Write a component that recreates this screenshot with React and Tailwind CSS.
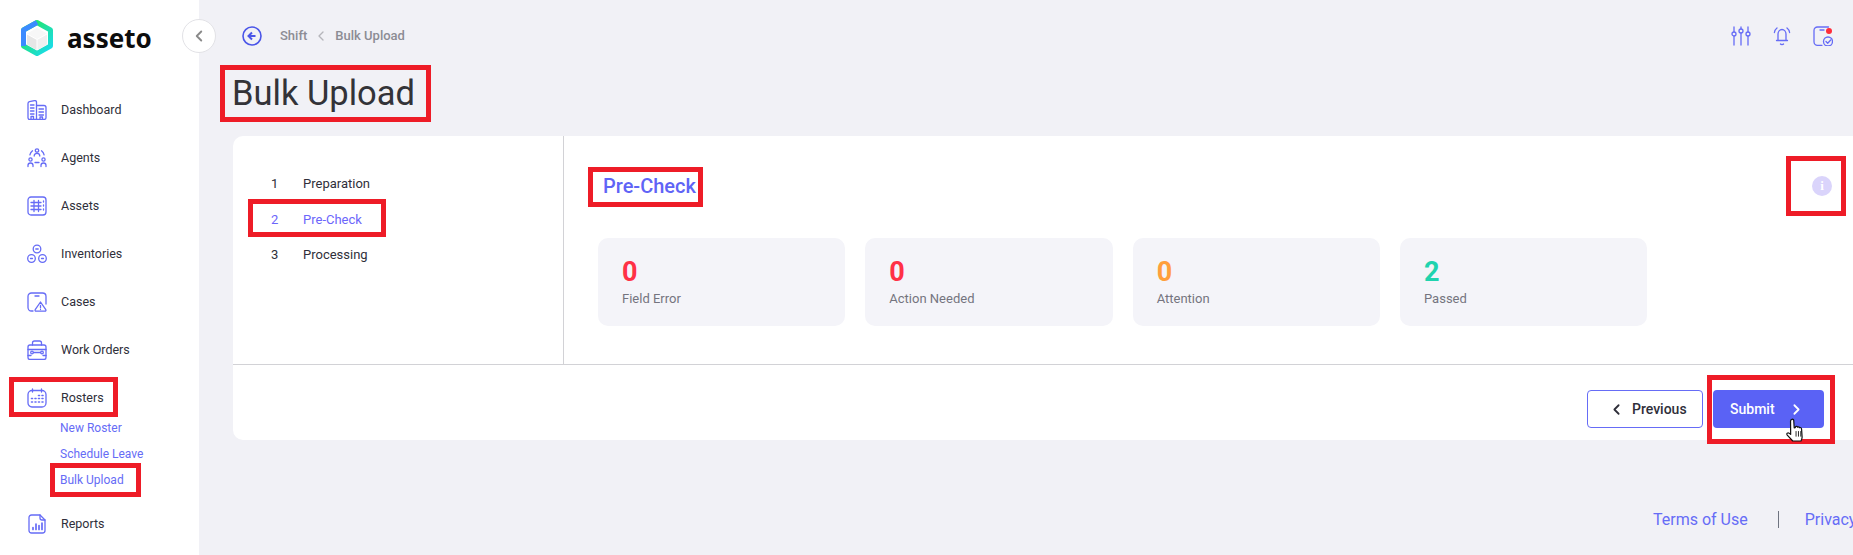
import React from 'react';
import { ChevronLeft, ChevronRight } from 'lucide-react';

const Ico = ({ children, size = 20, className = 'text-[#666cf6]' }) => (
  <svg width={size} height={size} viewBox="0 0 20 20" fill="none" stroke="currentColor" strokeWidth="1.3" strokeLinecap="round" strokeLinejoin="round" className={`shrink-0 ${className}`}>
    {children}
  </svg>
);

const DashboardIcon = () => (
  <Ico>
    <path d="M1 3.500c0-1 .6-1.600 1.500-1.800L7.500.6C8.600.4 9.500 1 9.500 2v17.400H2.600c-.9 0-1.600-.7-1.600-1.600z" />
    <path d="M9.500 5.500h7.400c1.200 0 2.100.9 2.100 2v10.300c0 .9-.7 1.600-1.600 1.600H9.500" />
    <path d="M3.500 5h3.500M3.500 8h3.500M3.500 11h3.500M3.500 14h3.500M12 9h4.500M12 12h4.500M12 15h4.500M4 19v-2.500h2.500V19M13 19v-2h2.500v2" />
  </Ico>
);
const AgentsIcon = () => (
  <Ico>
    <circle cx="10" cy="2.500" r="1.700" />
    <path d="M7.200 8c0-1.600 1.200-2.700 2.800-2.700s2.800 1.100 2.800 2.700M5.500 2.800C4 4 3.300 5 2.900 6.800M14.500 2.800c1.500 1.200 2.200 2.200 2.600 4" />
    <circle cx="3.500" cy="11.500" r="1.600" />
    <circle cx="16.500" cy="11.500" r="1.600" />
    <path d="M1 18.500v-1.200c0-1.300 1.100-2.300 2.500-2.300S6 16 6 17.300v1.200M14 18.500v-1.200c0-1.300 1.100-2.300 2.500-2.300s2.500 1 2.500 2.300v1.200M8 14.500h4" />
  </Ico>
);
const AssetsIcon = () => (
  <Ico>
    <rect x="1" y="1" width="18" height="18" rx="3" />
    <path d="M4 6.500h10M4 10h10M4 13.500h10M7 4.500v11M11.500 4.500v11M16.500 5v1M16.500 9v1M16.500 13v1" />
  </Ico>
);
const InventoriesIcon = () => (
  <Ico>
    <circle cx="10" cy="5" r="3.800" />
    <circle cx="4.500" cy="14.500" r="3.800" />
    <circle cx="15.500" cy="14.500" r="3.800" />
    <path d="M8.800 5h2.400M3.500 14.500h2M14.500 14.500h2" />
  </Ico>
);
const CasesIcon = () => (
  <Ico>
    <path d="M6 19H4.500C2.500 19 1 17.500 1 15.500v-11C1 2.500 2.500 1 4.500 1h11C17.500 1 19 2.500 19 4.500V12" />
    <path d="M8 4h4" />
    <path d="M13.500 10l5.300 7.700c.4.700 0 1.500-.8 1.500H9c-.8 0-1.200-.8-.8-1.500z" />
    <path d="M13.500 13.500v2.300M13.500 17.500v.1" />
  </Ico>
);
const WorkOrdersIcon = () => (
  <Ico>
    <path d="M5.500 5V3c0-1.100.9-2 2-2h5c1.100 0 2 .9 2 2v2" />
    <path d="M3 5h14c1.100 0 2 .9 2 2v10.500c0 1.100-.9 2-2 2H3c-1.100 0-2-.9-2-2V7c0-1.100.9-2 2-2z" />
    <path d="M1 9.500h18M1 15.500h3M16 15.500h3M6.500 12.500h7" />
    <circle cx="5" cy="12.500" r="1.300" />
    <circle cx="15" cy="12.500" r="1.300" />
  </Ico>
);
const RostersIcon = () => (
  <Ico>
    <rect x="1" y="2.500" width="18" height="16.500" rx="4" />
    <path d="M5.500 1v3M14.500 1v3" />
    <path d="M4.500 10.500h1M8 10.500h1M11.500 10.500h1M15 10.500h1M4.500 14h1M8 14h1M11.500 14h1M15 14h1M11.500 7.500h1M15 7.500h1" strokeWidth="1.600" />
  </Ico>
);
const ReportsIcon = () => (
  <Ico>
    <path d="M2 3.500C2 2.100 3.100 1 4.500 1H13l5 5v10.500c0 1.400-1.100 2.500-2.500 2.500h-11C3.100 19 2 17.900 2 16.500z" />
    <path d="M13 1v3c0 1.100.9 2 2 2h3" />
    <path d="M6 15.500v-2M9 15.500V10M12 15.500v-4M15 15.500V9" strokeWidth="1.700" />
  </Ico>
);

const Logo = () => (
  <svg width="36" height="38" viewBox="0 0 36 38" className="shrink-0">
    <defs>
      <linearGradient id="hexTop" x1="0" y1="0" x2="1" y2="1">
        <stop offset="0" stopColor="#20e84a" />
        <stop offset="0.5" stopColor="#20e0a0" />
        <stop offset="1" stopColor="#18dcf4" />
      </linearGradient>
    </defs>
    <path d="M18 3.500L31.500 11v16L18 34.500 4.500 27V11z" fill="none" stroke="url(#hexTop)" strokeWidth="5" strokeLinejoin="round" />
    <path d="M4.500 27V11L18 3.500" fill="none" stroke="#3b8bff" strokeWidth="5" strokeLinejoin="round" />
    <path d="M18 9l10 5.500-10 5.500-10-5.500z" fill="#f7f7f7" />
    <path d="M8 15.500l9.500 5.300V31L8 25.500z" fill="#e6e6e6" />
    <path d="M28 15.500l-9.500 5.300V31l9.500-5.500z" fill="#f0f0f0" />
  </svg>
);

const NAV = [
  { label: 'Dashboard', icon: DashboardIcon },
  { label: 'Agents', icon: AgentsIcon },
  { label: 'Assets', icon: AssetsIcon },
  { label: 'Inventories', icon: InventoriesIcon },
  { label: 'Cases', icon: CasesIcon },
  { label: 'Work Orders', icon: WorkOrdersIcon },
  { label: 'Rosters', icon: RostersIcon },
];

const STATS = [
  { value: '0', label: 'Field Error', color: 'text-[#ff3146]' },
  { value: '0', label: 'Action Needed', color: 'text-[#ff3146]' },
  { value: '0', label: 'Attention', color: 'text-[#ff9f3c]' },
  { value: '2', label: 'Passed', color: 'text-[#20d3ae]' },
];

const NavRow = ({ label, icon: Icon }) => (
  <div className="h-[48px] flex items-center pl-[27px] gap-[14px] text-[12.5px] text-[#2f2f3a]">
    <Icon />
    <span>{label}</span>
  </div>
);

const Sidebar = () => (
  <aside className="w-[199px] shrink-0 bg-white">
    <div className="h-[86px] pl-[19px] pt-[19px] flex items-start gap-[12px]">
      <Logo />
      <span className="font-['Noto_Sans',sans-serif] font-bold text-[26px] leading-[38px] text-[#0d0d0d]">asseto</span>
    </div>
    {NAV.map((n) => <NavRow key={n.label} {...n} />)}
    <div className="-mt-[7px] pl-[60px] text-[12px] text-[#666cf6]">
      <div className="h-[26px] flex items-center">New Roster</div>
      <div className="h-[26px] flex items-center">Schedule Leave</div>
      <div className="h-[26px] flex items-center">Bulk Upload</div>
    </div>
    <div className="mt-[7px]">
      <NavRow label="Reports" icon={ReportsIcon} />
    </div>
  </aside>
);

const Topbar = () => (
  <div className="h-[72px] flex items-center justify-between pr-[20px]">
    <div className="flex items-center text-[13px] font-medium text-[#8c8c94]">
      <svg width="20" height="20" viewBox="0 0 20 20" fill="none" className="ml-[9px] mr-[18px] text-[#4a55e8]" stroke="currentColor" strokeWidth="1.600">
        <circle cx="10" cy="10" r="9" />
        <path d="M10 6.500L6.500 10l3.500 3.500M7 10h6.500" strokeWidth="2" />
      </svg>
      <span>Shift</span>
      <ChevronLeft size={16} className="mx-[6px] text-[#b5b5bb]" />
      <span>Bulk Upload</span>
    </div>
    <div className="flex items-center gap-[21px]">
      <Ico>
        <path d="M3 1v5M3 10v9M10 1v2M10 7v12M17 1v5M17 10v9" />
        <circle cx="3" cy="8" r="2" />
        <circle cx="10" cy="5" r="2" />
        <circle cx="17" cy="8" r="2" />
      </Ico>
      <Ico>
        <path d="M6 14.500V8c0-2.500 1.700-4.500 4-4.500s4 2 4 4.500v6.500M4.500 14.500h11M8.500 18c.5.700 2.500.700 3 0" />
        <path d="M5 2C3.500 3.200 2.600 4.800 2.400 6.500M15 2c1.500 1.200 2.400 2.800 2.600 4.500" />
      </Ico>
      <div className="relative">
        <Ico>
          <path d="M9 19.300H4.500C2.500 19.300 1 17.800 1 15.800V4.500C1 2.500 2.500 1 4.500 1h11" />
          <path d="M7 4h4" />
          <circle cx="15" cy="15.500" r="4.500" />
          <path d="M13 15.500l1.700 1.700 3-3.200" />
        </Ico>
        <span className="absolute top-[2px] right-[1px] w-[6px] h-[6px] rounded-full bg-[#ff2d3b]" />
      </div>
    </div>
  </div>
);

const StatCard = ({ value, label, color }) => (
  <div className="w-[247.33px] h-[88px] rounded-[10px] bg-[#f4f4f9] pl-[24px] pt-[19px]">
    <div className={`text-[27px] leading-[30px] font-bold ${color}`}>{value}</div>
    <div className="mt-[2px] text-[13px] leading-[20px] text-[#74747f]">{label}</div>
  </div>
);

const Annot = ({ className }) => (
  <div className={`absolute border-[5px] border-[#ee1c27] pointer-events-none ${className}`} />
);

export default function App() {
  return (
    <div className="relative w-[1853px] h-[555px] overflow-hidden flex bg-[#f1f1f6] font-['Roboto',sans-serif]">
      <Sidebar />

      <main className="flex-1 min-w-0 pl-[34px]">
        <Topbar />
        <h1 className="h-[64px] -ml-[1px] text-[34.5px] leading-[42px] text-[#333338]">Bulk Upload</h1>

        <section className="h-[304px] bg-white rounded-l-[10px] flex flex-col">
          <div className="h-[229px] flex border-b border-[#d2d2d6]">
            <div className="w-[331px] shrink-0 border-r border-[#d2d2d6] pl-[38px] pt-[30px] text-[13px] text-[#2f2f3a]">
              <div className="h-[36px] flex items-center"><span className="w-[32px]">1</span>Preparation</div>
              <div className="h-[35px] flex items-center text-[#6c66fb]"><span className="w-[32px]">2</span>Pre-Check</div>
              <div className="h-[36px] flex items-center"><span className="w-[32px]">3</span>Processing</div>
            </div>
            <div className="flex-1 pl-[34px] pr-[21px]">
              <div className="h-[102px] flex items-center justify-between pl-[5px] pb-[2px]">
                <h2 className="text-[20px] font-medium text-[#5f64f6]">Pre-Check</h2>
                <span className="w-[20px] h-[20px] rounded-full bg-[#dad4fb] flex items-center justify-center text-white text-[13px] font-bold font-['Liberation_Serif',serif]">i</span>
              </div>
              <div className="flex gap-[20px]">
                {STATS.map((s) => <StatCard key={s.label} {...s} />)}
              </div>
            </div>
          </div>
          <div className="flex-1 flex items-start justify-end pt-[25px] pr-[29px] gap-[10px] text-[14px] font-medium">
            <button className="w-[116px] h-[38px] rounded-[4px] border border-[#666cf6] bg-white text-[#2f2f3a] flex items-center pl-[20px] gap-[7px]">
              <ChevronLeft size={17} strokeWidth={2.500} />
              Previous
            </button>
            <button className="w-[111px] h-[38px] rounded-[4px] bg-[#5a62f5] text-white flex items-center pl-[17px] gap-[13px]">
              Submit
              <ChevronRight size={17} strokeWidth={2.500} />
            </button>
          </div>
        </section>

        <footer className="h-[43px] mt-[58px] flex items-center pl-[1420px] text-[16px] text-[#666cf6] whitespace-nowrap">
          <span>Terms of Use</span>
          <span className="w-px h-[17px] shrink-0 bg-[#6f7480] ml-[30px] mr-[26px]" />
          <span>Privacy Policy</span>
        </footer>
      </main>

      {/* collapse toggle, sits over the sidebar edge */}
      <div className="absolute left-[182px] top-[19px] w-[34px] h-[34px] rounded-full bg-white border border-[#e2e2e6] flex items-center justify-center text-[#8a8a8a]">
        <ChevronLeft size={18} strokeWidth={2.500} />
      </div>

      {/* red annotation boxes from the screenshot */}
      <Annot className="left-[220px] top-[65px] w-[211px] h-[57px]" />
      <Annot className="left-[248px] top-[199px] w-[138px] h-[38px]" />
      <Annot className="left-[588px] top-[167px] w-[115px] h-[40px]" />
      <Annot className="left-[1786px] top-[156px] w-[60px] h-[60px]" />
      <Annot className="left-[1707px] top-[375px] w-[128px] h-[69px]" />
      <Annot className="left-[9px] top-[377px] w-[109px] h-[40px]" />
      <Annot className="left-[50px] top-[463px] w-[91px] h-[34px]" />

      {/* mouse pointer */}
      <svg width="19" height="22" viewBox="0 0 19 22" className="absolute left-[1786px] top-[419px] scale-110">
        <path d="M6 1.500c.8-.6 1.800-.2 1.900.8L8.300 9l1-.2.400-.9c.7-.4 1.400-.2 1.700.5.700-.5 1.500-.3 1.800.5.800-.4 1.700 0 1.800 1l.5 7.600c0 1.300-.5 2.400-1 3.500H7l-5-5.300c-.6-.8-.5-1.600.3-2 .7-.4 1.500 0 2.800 1.300L5 2.800c0-.5.400-1 1-1.300z" fill="#fff" stroke="#111" strokeWidth="1.100" strokeLinejoin="round" />
        <path d="M10 12v5M12.200 12v5M14.300 12v5" stroke="#111" strokeWidth="0.800" />
      </svg>
    </div>
  );
}
